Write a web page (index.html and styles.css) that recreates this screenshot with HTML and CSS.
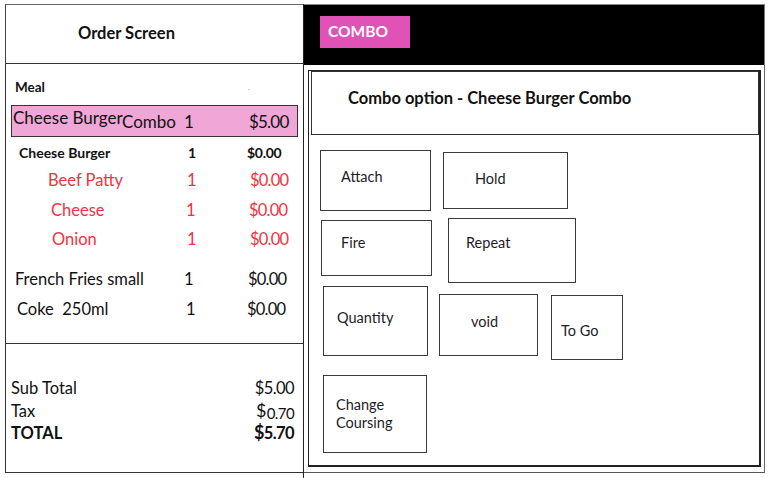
FILE: index.html
```html
<!DOCTYPE html>
<html>
<head>
<meta charset="utf-8">
<link rel="stylesheet" href="styles.css">
</head>
<body>
<div class="screen">
  <section class="order">
    <header class="order-head">Order Screen</header>
    <div class="order-items">
      <div class="row meal"><span class="name">Meal</span><span class="dot">.</span></div>
      <div class="row combo-row">
        <span class="name raised">Cheese Burger</span><span class="sub">Combo</span><span class="qty">1</span><span class="price">$5.00</span>
      </div>
      <div class="row bold cb"><span class="name">Cheese Burger</span><span class="qty">1</span><span class="price">$0.00</span></div>
      <div class="row red beef"><span class="name">Beef Patty</span><span class="qty">1</span><span class="price">$0.00</span></div>
      <div class="row red cheese"><span class="name">Cheese</span><span class="qty">1</span><span class="price">$0.00</span></div>
      <div class="row red onion"><span class="name">Onion</span><span class="qty">1</span><span class="price">$0.00</span></div>
      <div class="row fries"><span class="name">French Fries small</span><span class="qty">1</span><span class="price">$0.00</span></div>
      <div class="row coke"><span class="name">Coke&nbsp; 250ml</span><span class="qty">1</span><span class="price">$0.00</span></div>
    </div>
    <div class="order-totals">
      <div class="trow"><span>Sub Total</span><span class="tval">$5.00</span></div>
      <div class="trow"><span>Tax</span><span class="tval"><span class="cur">$</span><span class="small">0.70</span></span></div>
      <div class="trow total"><span>TOTAL</span><span class="tval"><span class="cur">$</span>5.70</span></div>
    </div>
  </section>
  <section class="combo-panel">
    <div class="combo-bar"><div class="combo-tab">COMBO</div></div>
    <div class="combo-body">
      <div class="combo-inner">
        <div class="combo-title">Combo option - Cheese Burger Combo</div>
        <div class="brow r1">
          <div class="btn b-attach">Attach</div>
          <div class="btn b-hold">Hold</div>
        </div>
        <div class="brow r2">
          <div class="btn b-fire">Fire</div>
          <div class="btn b-repeat">Repeat</div>
        </div>
        <div class="brow r3">
          <div class="btn b-qty">Quantity</div>
          <div class="btn b-void">void</div>
          <div class="btn b-togo">To Go</div>
        </div>
        <div class="brow r4">
          <div class="btn b-course">Change<br>Coursing</div>
        </div>
      </div>
    </div>
  </section>
</div>
</body>
</html>
```

FILE: styles.css
```css
* { box-sizing: border-box; }
html, body { margin: 0; padding: 0; background: #fff; }
body {
  font-family: Lato, "Open Sans", sans-serif;
  color: #111;
  width: 770px;
  height: 478px;
  overflow: hidden;
}
.screen {
  display: flex;
  margin: 4px 0 0 5px;
}

/* ---------- left: order ---------- */
.order {
  width: 298px;
  display: flex;
  flex-direction: column;
}
.order-head {
  height: 60px;
  border-top: 1px solid #666;
  border-left: 1px solid #444;
  border-bottom: 1px solid #333;
  display: flex;
  align-items: center;
  padding: 0 0 3px 72px;
  font-weight: bold;
  font-size: 16.5px;
}
.order-items {
  height: 279px;
  border-left: 1px solid #333;
}
.row {
  display: flex;
  align-items: center;
  height: 22px;
  font-size: 16.5px;
  white-space: pre;
}
.row .qty { width: 63px; }
.row .price { letter-spacing: -0.8px; }
.meal { margin-top: 12px; padding-left: 9px; font-weight: bold; font-size: 13.5px; }
.meal .name { width: 233px; }
.dot { color: #999; font-size: 8px; font-weight: normal; }
.combo-row {
  margin: 7px 0 0 5px;
  width: 287px;
  height: 32px;
  background: #f0a6d6;
  border: 1px solid #333;
  padding-left: 1px;
  font-size: 17px;
}
.combo-row .name { width: 109px; padding-bottom: 7px; }
.combo-row .sub { width: 62px; padding-top: 1px; }
.combo-row .qty { width: 65px; padding-top: 1px; }
.combo-row .price { padding-top: 1px; }
.bold { font-weight: bold; font-size: 14px; }
.bold .price { letter-spacing: -0.3px; }
.cb { margin-top: 4px; padding-left: 13px; }
.cb .name { width: 169px; }
.cb .qty { width: 59px; }
.red { color: #f3323f; }
.beef { margin-top: 6px; padding-left: 42px; }
.beef .name { width: 139px; }
.cheese { margin-top: 8px; padding-left: 45px; }
.cheese .name { width: 135px; }
.onion { margin-top: 7px; padding-left: 46px; }
.onion .name { width: 135px; }
.fries { margin-top: 18px; padding-left: 9px; }
.fries .name { width: 169px; }
.fries .qty { width: 64px; }
.coke { margin-top: 8px; padding-left: 11px; }
.coke .name { width: 169px; }
.coke .qty { width: 61px; }

.order-totals {
  height: 130px;
  border-top: 1px solid #333;
  border-left: 1px solid #333;
  border-bottom: 1px solid #333;
  padding: 33px 9px 0 5px;
  font-size: 16.5px;
}
.trow {
  display: flex;
  justify-content: space-between;
  align-items: baseline;
  height: 22px;
  line-height: 22px;
}
.tval { letter-spacing: -0.6px; }
.total { font-weight: bold; }
.cur { font-size: 18px; }
.small { font-size: 15px; position: relative; top: 2px; margin-left: 1px; }

/* ---------- right: combo ---------- */
.combo-panel {
  width: 462px;
  height: 474px;
  border-left: 1px solid #222;
  display: flex;
  flex-direction: column;
}
.combo-bar {
  height: 61px;
  background: #000;
  border-top: 1px solid #888;
  border-right: 1px solid #777;
  padding: 11px 0 0 16px;
}
.combo-tab {
  width: 90px;
  height: 32px;
  background: #e052b5;
  color: #fff;
  font-weight: bold;
  font-size: 15.5px;
  display: flex;
  align-items: center;
  padding: 0 0 3px 8px;
}
.combo-body {
  height: 408px;
  border-right: 1px solid #666;
  border-bottom: 1px solid #555;
  padding: 5px 3px 5px 4px;
}
.combo-inner {
  height: 397px;
  border: 1px solid #222;
  border-right-width: 2px;
  border-bottom-width: 2px;
}
.combo-title {
  height: 64px;
  margin-left: 2px;
  border: 1px solid #333;
  padding: 16px 0 0 36px;
  font-weight: bold;
  font-size: 16.5px;
  line-height: 20px;
}
.brow {
  display: flex;
  align-items: flex-start;
}
.btn {
  border: 1px solid #3a3a3a;
  font-size: 14.5px;
  color: #1c1c28;
  line-height: 18px;
}
.r1 { margin-top: 15px; }
.b-attach { margin-left: 11px; width: 111px; height: 61px; padding: 17px 0 0 20px; }
.b-hold { margin-left: 12px; margin-top: 2px; width: 125px; height: 57px; padding: 17px 0 0 31px; }
.r2 { margin-top: 7px; }
.b-fire { margin-left: 12px; margin-top: 2px; width: 111px; height: 56px; padding: 13px 0 0 19px; }
.b-repeat { margin-left: 16px; width: 128px; height: 65px; padding: 15px 0 0 17px; }
.r3 { margin-top: 3px; }
.b-qty { margin-left: 14px; width: 105px; height: 70px; padding: 22px 0 0 13px; }
.b-void { margin-left: 11px; margin-top: 8px; width: 99px; height: 62px; padding: 18px 0 0 31px; }
.b-togo { margin-left: 13px; margin-top: 9px; width: 72px; height: 65px; padding: 26px 0 0 9px; }
.r4 { margin-top: 15px; }
.b-course { margin-left: 14px; width: 104px; height: 78px; padding: 20px 0 0 12px; }
```
